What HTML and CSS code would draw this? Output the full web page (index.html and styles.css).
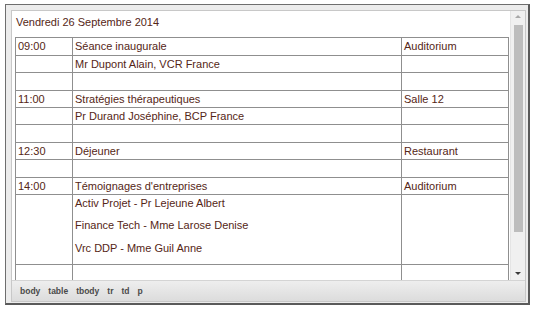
FILE: index.html
```html
<!DOCTYPE html>
<html lang="fr">
<head>
<meta charset="utf-8">
<title>Programme</title>
<link rel="stylesheet" href="styles.css">
</head>
<body>
<div class="editor">
  <div class="panel">
    <div class="body-area">
      <div class="doc">
        <p class="day">Vendredi 26 Septembre 2014</p>
        <table class="agenda">
          <colgroup>
            <col class="col-time">
            <col class="col-item">
            <col class="col-room">
          </colgroup>
          <tbody>
            <tr><td>09:00</td><td>Séance inaugurale</td><td>Auditorium</td></tr>
            <tr><td>&nbsp;</td><td>Mr Dupont Alain, VCR France</td><td>&nbsp;</td></tr>
            <tr><td>&nbsp;</td><td>&nbsp;</td><td>&nbsp;</td></tr>
            <tr><td>11:00</td><td>Stratégies thérapeutiques</td><td>Salle 12</td></tr>
            <tr><td>&nbsp;</td><td>Pr Durand Joséphine, BCP France</td><td>&nbsp;</td></tr>
            <tr><td>&nbsp;</td><td>&nbsp;</td><td>&nbsp;</td></tr>
            <tr><td>12:30</td><td>Déjeuner</td><td>Restaurant</td></tr>
            <tr><td>&nbsp;</td><td>&nbsp;</td><td>&nbsp;</td></tr>
            <tr><td>14:00</td><td>Témoignages d'entreprises</td><td>Auditorium</td></tr>
            <tr>
              <td>&nbsp;</td>
              <td>
                <p>Activ Projet - Pr Lejeune Albert</p>
                <p>Finance Tech - Mme Larose Denise</p>
                <p>Vrc DDP - Mme Guil Anne</p>
              </td>
              <td>&nbsp;</td>
            </tr>
            <tr><td>&nbsp;</td><td>&nbsp;</td><td>&nbsp;</td></tr>
            <tr><td>&nbsp;</td><td>&nbsp;</td><td>&nbsp;</td></tr>
          </tbody>
        </table>
      </div>
      <div class="scrollbar">
        <span class="arrow arrow-up"></span>
        <div class="track"><div class="thumb"></div></div>
        <span class="arrow arrow-down"></span>
      </div>
    </div>
    <div class="statusbar">
      <span>body</span><span>table</span><span>tbody</span><span>tr</span><span>td</span><span>p</span>
    </div>
  </div>
</div>
</body>
</html>
```
FILE: styles.css
```css
html, body {
  margin: 0;
  padding: 0;
  background: #ffffff;
}

body {
  font-family: "Liberation Sans", Arial, sans-serif;
}

.editor {
  box-sizing: border-box;
  width: 525px;
  height: 301px;
  margin: 4px 0 0 5px;
  padding: 5px 2px 1px 5px;
  background: #ececec;
  border: 1px solid #6e6e6e;
  border-right: 2px solid #5a5a5a;
  border-bottom: 2px solid #5a5a5a;
  display: flex;
}

.panel {
  flex: 1;
  display: flex;
  flex-direction: column;
  border: 1px solid #c8c8c8;
  background: #ffffff;
  min-width: 0;
}

.body-area {
  flex: 1;
  display: flex;
  min-height: 0;
  overflow: hidden;
}

.doc {
  flex: 1;
  padding: 3px 3px 0 3px;
  overflow: hidden;
  color: #552616;
  font-size: 11px;
  line-height: 14.4px;
}

.day {
  margin: 1px 0 8px;
  padding-left: 1px;
}

.agenda {
  width: 493px;
  table-layout: fixed;
  border-collapse: collapse;
  border: 1px solid #8a8a8a;
}

.col-time { width: 57px; }
.col-item { width: 329px; }
.col-room { width: 107px; }

.agenda td {
  border: 1px solid #8f8f8f;
  padding: 1px 2px;
  vertical-align: top;
  white-space: nowrap;
}

.agenda td p {
  margin: 0 0 8px;
}

/* vertical scrollbar of the editing area */
.scrollbar {
  width: 14px;
  display: flex;
  flex-direction: column;
  align-items: center;
  background: #f0f0f0;
  border-left: 1px solid #e4e4e4;
}

.arrow {
  display: block;
  width: 0;
  height: 0;
  border-left: 3px solid transparent;
  border-right: 3px solid transparent;
  margin: 4px 0;
}

.arrow-up {
  border-bottom: 3px solid #a8a8a8;
}

.arrow-down {
  border-top: 3px solid #3a3a3a;
  margin-bottom: 5px;
}

.track {
  flex: 1;
  width: 100%;
  display: flex;
  justify-content: center;
  padding-top: 3px;
}

.thumb {
  width: 9px;
  height: 207px;
  background: #bdbdbd;
}

.statusbar {
  height: 20px;
  display: flex;
  align-items: center;
  gap: 8px;
  padding-left: 8px;
  border-top: 1px solid #d4d4d4;
  background: linear-gradient(#eeeeee, #dcdcdc);
  font-size: 8.5px;
  font-weight: bold;
  color: #4a4a4a;
}
```
